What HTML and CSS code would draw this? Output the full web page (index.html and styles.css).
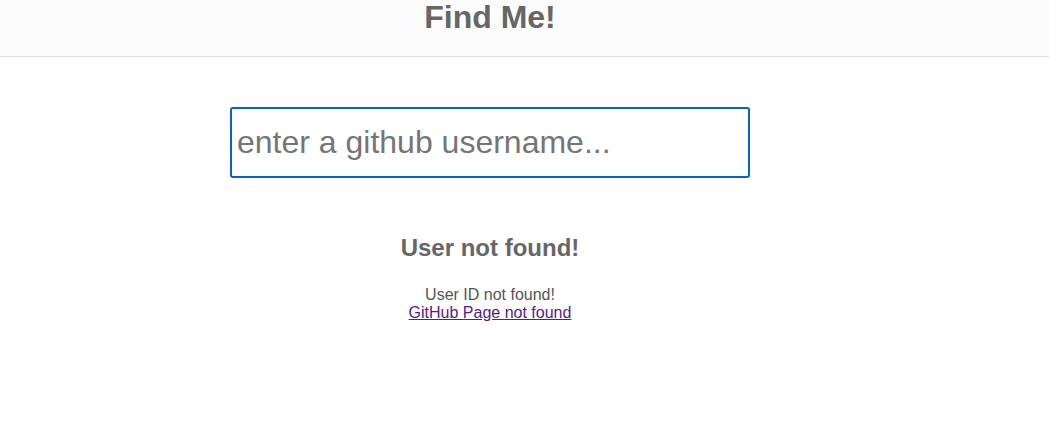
FILE: index.html
```html
<!DOCTYPE html>
<html>
<head>
<meta charset="utf-8">
<link rel="stylesheet" href="styles.css">
</head>
<body>
<header class="topbar">
  <h1 class="title">Find Me!</h1>
</header>
<main class="content">
  <input class="search" type="text" placeholder="enter a github username..." autofocus>
  <h2 class="status">User not found!</h2>
  <div class="details">
    <div>User ID not found!</div>
    <a class="link" href="#">GitHub Page not found</a>
  </div>
</main>
</body>
</html>
```
FILE: styles.css
```css
html, body {
  margin: 0;
  padding: 0;
  background: #ffffff;
  font-family: "Liberation Sans", Arial, sans-serif;
  color: #666666;
}
.topbar {
  height: 56px;
  background: #fcfcfc;
  border-bottom: 1px solid #e2e2e2;
  box-sizing: content-box;
}
.title {
  width: 980px;
  margin: 0;
  text-align: center;
  font-size: 32px;
  line-height: 34px;
  font-weight: bold;
  color: #666666;
}
.content {
  width: 980px;
  display: flex;
  flex-direction: column;
  align-items: center;
  text-align: center;
}
.search {
  margin-top: 50px;
  width: 520px;
  height: 71px;
  box-sizing: border-box;
  border: 2px solid #0a60c9;
  border-radius: 3px;
  padding: 0 5px;
  font-family: "Liberation Sans", Arial, sans-serif;
  font-size: 32px;
  color: #333;
  outline: none;
  caret-color: #000;
}
.search::placeholder {
  color: #757575;
}
.status {
  margin: 56px 0 0;
  font-size: 24px;
  line-height: 28px;
  font-weight: bold;
  color: #666666;
}
.details {
  margin-top: 24px;
  font-size: 16px;
  line-height: 18px;
  color: #555555;
}
.link {
  color: #551a8b;
  text-decoration: underline;
}
```
